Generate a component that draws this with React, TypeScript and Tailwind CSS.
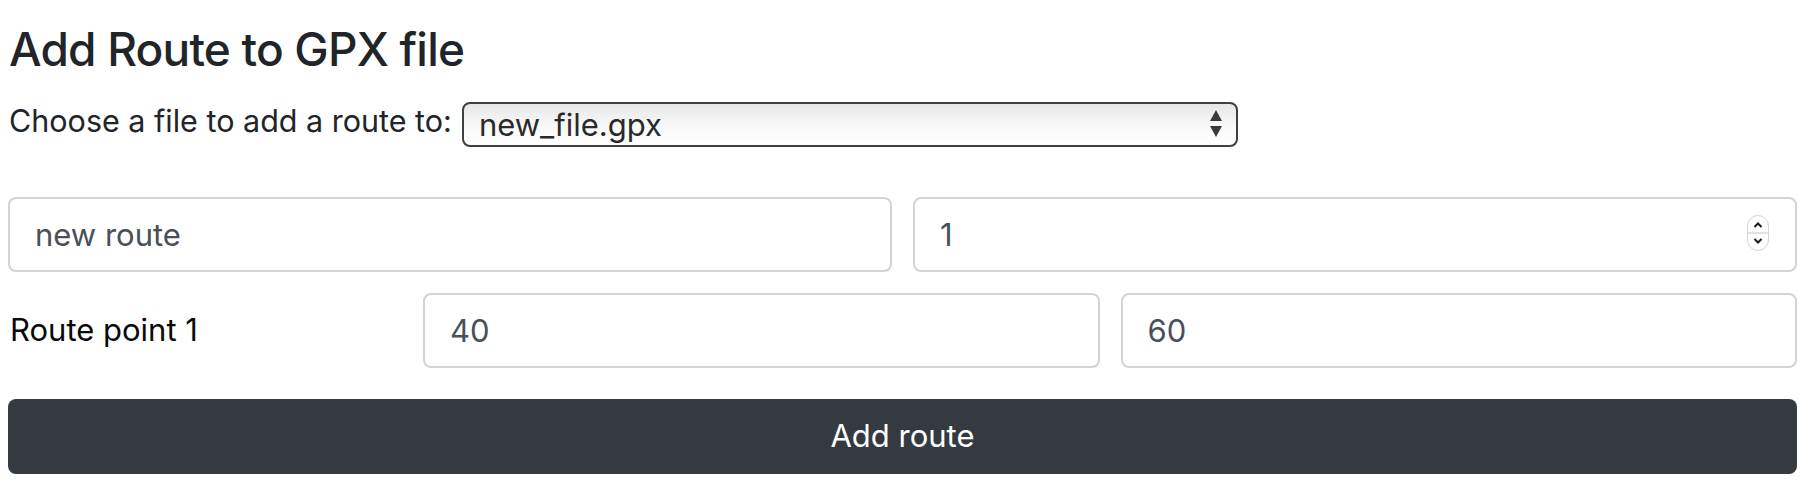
import { useState } from 'react';

function Spinner() {
  return (
    <div className="pointer-events-none absolute right-[28px] top-[18px] flex h-[36px] w-[22px] flex-col items-center justify-center overflow-hidden rounded-full border border-[#d4d4d4] bg-white">
      <svg width="12" height="10" viewBox="0 0 12 10" className="mb-[2px]">
        <path d="M2.5 7 L6 3.5 L9.5 7" fill="none" stroke="#1a1a1a" strokeWidth="2" />
      </svg>
      <div className="h-[2px] w-full bg-[#e2e2e2]" />
      <svg width="12" height="10" viewBox="0 0 12 10" className="mt-[2px]">
        <path d="M2.5 3 L6 6.5 L9.5 3" fill="none" stroke="#1a1a1a" strokeWidth="2" />
      </svg>
    </div>
  );
}

const inputClass =
  'h-[75px] w-full rounded-[8px] border-2 border-[#ced4da] bg-white px-[25px] text-[31px] text-[#495057] outline-none';

export default function App() {
  const [file, setFile] = useState('new_file.gpx');
  const [name, setName] = useState('new route');
  const [count, setCount] = useState('1');
  const [lat, setLat] = useState('40');
  const [lon, setLon] = useState('60');

  return (
    <div className="min-h-[498px] bg-white pl-[8px] pr-[17px] pt-[22px] font-['Inter',sans-serif]">
      <h1 className="pl-[1px] text-[46px] font-medium leading-[1.2] tracking-[-0.8px] text-[#212529]">
        Add Route to GPX file
      </h1>

      <div className="mt-[25px] flex items-start">
        <label className="pl-[1px] pt-[4px] text-[30.5px] leading-none text-[#212529]">
          Choose a file to add a route to:
        </label>
        <div className="relative ml-[10px] h-[45px] w-[776px]">
          <select
            value={file}
            onChange={(e) => setFile(e.target.value)}
            className="h-full w-full appearance-none rounded-[8px] border-2 border-[#3f3f3f] bg-gradient-to-b from-[#e6e6e6] via-[#f8f8f8] to-white py-0 pl-[15px] text-[31px] leading-[1.2] text-[#2a2a2a] outline-none"
          >
            <option value="new_file.gpx">new_file.gpx</option>
          </select>
          <svg
            width="14"
            height="30"
            viewBox="0 0 14 30"
            className="pointer-events-none absolute right-[15px] top-[7px]"
          >
            <path d="M7 1 L13 12 L1 12 Z" fill="#3a3a3a" />
            <path d="M1 17 L13 17 L7 28 Z" fill="#3a3a3a" />
          </svg>
        </div>
      </div>

      <form className="mt-[50px]" onSubmit={(e) => e.preventDefault()}>
        <div className="grid grid-cols-2 gap-x-[21px]">
          <input className={inputClass} value={name} onChange={(e) => setName(e.target.value)} />
          <div className="relative">
            <input className={inputClass} value={count} onChange={(e) => setCount(e.target.value)} />
            <Spinner />
          </div>
        </div>

        <div className="mt-[21px] grid grid-cols-[394px_1fr_1fr] items-center gap-x-[21px]">
          <label className="pl-[2px] text-[31px] text-[#0a0a0a]">Route point 1</label>
          <input className={inputClass} value={lat} onChange={(e) => setLat(e.target.value)} />
          <input className={inputClass} value={lon} onChange={(e) => setLon(e.target.value)} />
        </div>

        <button
          type="submit"
          className="mt-[31px] h-[75px] w-full rounded-[8px] bg-[#343a40] text-[31px] text-white"
        >
          Add route
        </button>
      </form>
    </div>
  );
}
